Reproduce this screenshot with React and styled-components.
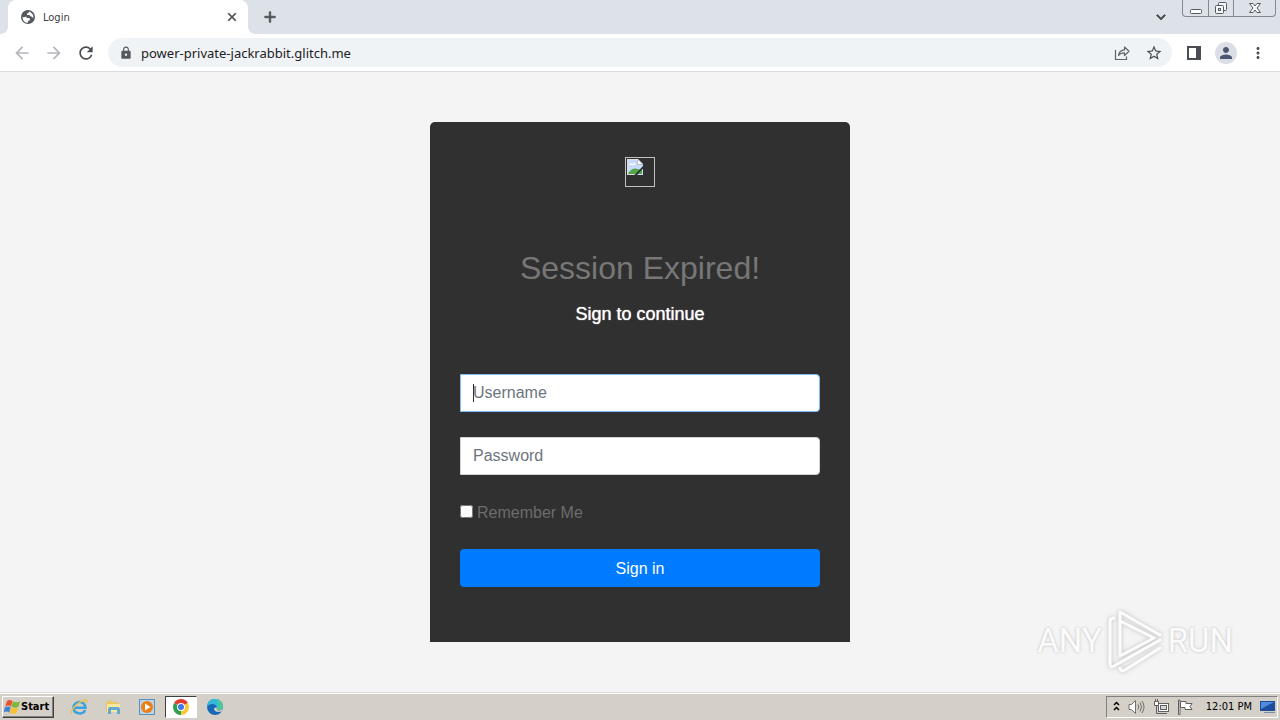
import styled, { createGlobalStyle, css } from 'styled-components';
import {
  MdClose,
  MdAdd,
  MdExpandMore,
  MdArrowBack,
  MdArrowForward,
  MdRefresh,
  MdLock,
  MdStarBorder,
  MdPerson,
  MdMoreVert,
} from 'react-icons/md';

const GlobalStyle = createGlobalStyle`
  * {
    box-sizing: border-box;
  }
  body {
    margin: 0;
    font-family: "Liberation Sans", Arial, sans-serif;
  }
  button {
    font-family: inherit;
    cursor: pointer;
  }
`;

const uiFont = css`
  font-family: "DejaVu Sans Condensed", Tahoma, "Noto Sans", sans-serif;
`;

const Screen = styled.div`
  display: flex;
  flex-direction: column;
  min-height: 100vh;
  background: #f4f4f4;
`;

/* browser */

const TabStrip = styled.header`
  ${uiFont}
  display: flex;
  align-items: flex-start;
  height: 34px;
  padding: 0 4px 0 8px;
  background: #dde1e8;
`;

const Tab = styled.div`
  position: relative;
  display: flex;
  align-items: center;
  gap: 7px;
  width: 240px;
  height: 34px;
  padding: 0 9px 0 12px;
  border-radius: 8px 8px 0 0;
  background: #fff;
  font-size: 11px;
  color: #3c4043;

  &::before,
  &::after {
    content: '';
    position: absolute;
    bottom: 0;
    width: 8px;
    height: 8px;
  }
  &::before {
    left: -8px;
    background: radial-gradient(circle at 0 0, transparent 8px, #fff 8px);
  }
  &::after {
    right: -8px;
    background: radial-gradient(circle at 100% 0, transparent 8px, #fff 8px);
  }
`;

const TabTitle = styled.span`
  flex: 1;
`;

const IconButton = styled.button`
  display: flex;
  align-items: center;
  justify-content: center;
  width: ${(p) => p.$size || 32}px;
  height: ${(p) => p.$size || 32}px;
  padding: 0;
  border: 0;
  background: none;
  color: ${(p) => p.$color || '#4a4d51'};

  ${(p) =>
    p.$bold &&
    css`
      svg {
        stroke-width: 1;
      }
      path[fill='none'] {
        stroke: none;
      }
    `}
`;

const TabButton = styled(IconButton)`
  width: 28px;
  height: 34px;
  margin-left: ${(p) => (p.$end ? 'auto' : '8px')};
`;

const WindowButtons = styled.div`
  display: flex;
  height: 17px;
  margin-left: 7px;
  border: 1px solid #85898f;
  border-top: 0;
  border-radius: 0 0 4px 4px;
`;

const WindowButton = styled.button`
  display: flex;
  align-items: center;
  justify-content: center;
  width: ${(p) => (p.$wide ? 42 : 25)}px;
  padding: 0;
  border: 0;
  border-left: ${(p) => (p.$first ? 0 : '1px solid #85898f')};
  background: none;
`;

const Toolbar = styled.nav`
  ${uiFont}
  display: flex;
  align-items: center;
  height: 38px;
  padding: 0 6px;
  border-bottom: 1px solid #d9dbde;
  background: #fff;
`;

const AddressBar = styled.div`
  display: flex;
  flex: 1;
  align-items: center;
  height: 29px;
  margin: 0 6px;
  padding: 0 2px 0 11px;
  border-radius: 15px;
  background: #f0f3f6;
`;

const Address = styled.input`
  flex: 1;
  min-width: 0;
  height: 28px;
  margin-left: 8px;
  padding: 0;
  border: 0;
  outline: 0;
  background: none;
  font-family: "Noto Sans", Tahoma, sans-serif;
  font-size: 13px;
  color: #202124;
`;

const Avatar = styled.span`
  display: flex;
  align-items: center;
  justify-content: center;
  width: 22px;
  height: 22px;
  border-radius: 50%;
  background: #dbdfe5;
`;

/* login page */

const Page = styled.main`
  position: relative;
  flex: 1;
  padding: 50px 15px;
`;

const Card = styled.form`
  display: flex;
  flex-direction: column;
  max-width: 420px;
  margin: 0 auto;
  padding: 35px 30px 55px;
  border-radius: 5px 5px 0 0;
  background: #303030;
`;

const LogoBox = styled.div`
  align-self: center;
  width: 30px;
  height: 30px;
  padding: 1px;
  border: 1px solid #c0c0c0;
`;

const Title = styled.h2`
  margin: 62px 0 0;
  font-size: 32px;
  line-height: 38px;
  font-weight: 400;
  text-align: center;
  color: #777;
`;

const Subtitle = styled.h5`
  margin: 16px 0 49px;
  font-size: 18px;
  line-height: 22px;
  font-weight: 400;
  text-align: center;
  color: #fff;
  text-shadow: 0 0 1px #fff;
`;

const Field = styled.div`
  position: relative;
  height: 38px;
  margin-bottom: 25px;
`;

const TextInput = styled.input`
  width: 100%;
  height: 38px;
  padding: 6px 12px;
  border: 1px solid ${(p) => (p.$active ? '#80bdff' : '#ced4da')};
  border-radius: 0 4px 4px 0;
  outline: 0;
  background: #fff;
  font-family: inherit;
  font-size: 16px;
  line-height: 24px;
  color: #495057;

  &::placeholder {
    color: #6c757d;
    opacity: 1;
  }
`;

const Caret = styled.span`
  position: absolute;
  top: 10px;
  left: 13px;
  width: 1px;
  height: 18px;
  background: #303030;
`;

const Remember = styled.label`
  display: flex;
  align-items: center;
  gap: 4px;
  margin-bottom: 23px;
  font-size: 16px;
  line-height: 26px;
  color: #6c6c6c;
`;

const Checkbox = styled.input`
  width: 13px;
  height: 13px;
  margin: 0 0 4px;
`;

const SignIn = styled.button`
  height: 38px;
  padding: 2px 12px 0;
  border: 0;
  border-radius: 4px;
  background: #007bff;
  font-size: 16px;
  line-height: 24px;
  color: #fff;
`;

const Watermark = styled.div`
  position: absolute;
  right: 47px;
  bottom: 18px;
  display: flex;
  align-items: center;
  gap: 4px;
  font-family: Roboto, sans-serif;
  font-size: 33px;
  line-height: 66px;
  color: #fbfbfb;
  text-shadow: 0 0 3px #bbb;

  svg {
    filter: drop-shadow(0 0 2px #bbb);
  }
`;

/* taskbar */

const Taskbar = styled.footer`
  ${uiFont}
  display: flex;
  align-items: center;
  height: 28px;
  padding: 0 2px;
  border-top: 1px solid #dedbd6;
  background: #d4d0c8;
  box-shadow: inset 0 1px #fff;
  font-size: 11px;
`;

const Start = styled.button`
  display: flex;
  align-items: center;
  gap: 1px;
  height: 22px;
  margin-right: 7px;
  padding: 0 4px 0 1px;
  border: 1px solid;
  border-color: #fff #404040 #404040 #fff;
  background: #d4d0c8;
  box-shadow: inset -1px -1px #808080;
  font-size: 11px;
  font-weight: 700;
  color: #000;
`;

const TaskButton = styled.button`
  display: flex;
  align-items: center;
  justify-content: center;
  width: 32px;
  height: 22px;
  margin-left: 2px;
  padding: 0;
  border: 1px solid;
  border-color: ${(p) => (p.$pressed ? '#404040 #fff #fff #404040' : 'transparent')};
  background: ${(p) => (p.$pressed ? '#fff' : 'none')};
`;

const Tray = styled.div`
  display: flex;
  align-items: center;
  gap: 8px;
  height: 22px;
  margin-left: auto;
  padding: 0 1px 0 6px;
  border: 1px solid;
  border-color: #808080 #fff #fff #808080;
`;

const Clock = styled.time`
  margin: 0 0 0 5px;
  color: #000;
`;

const GlobeIcon = () => (
  <svg width="16" height="16" viewBox="0 0 16 16">
    <circle cx="8" cy="8" r="7" fill="#55585c" />
    <path d="M2.500 8Q2.500 11 4.500 12.800Q6.500 14 8 13.500V12Q10 12 10 10.200Q10 9 8.500 9H6.500V7.500Q4 8.500 2.500 8Z" fill="#fff" />
    <path d="M9 2.600Q9 4.500 7 4.500V6H9.500Q10 7.500 11.500 7.500Q12.500 9 13.500 8.500Q13.500 4.500 9 2.600Z" fill="#fff" />
  </svg>
);

const ShareIcon = () => (
  <svg width="18" height="18" viewBox="0 0 18 18" fill="none" stroke="#5f6368" strokeWidth="1.2">
    <path d="M2.500 6V15.500H13.500V12.500" />
    <path d="M5.500 11.500C6 8 8 6 11.500 5.800V3L16 7.300L11.500 11.500V8.800C9 8.800 7 9.500 5.500 11.500Z" strokeLinejoin="round" />
  </svg>
);

const SidePanelIcon = () => (
  <svg width="14" height="14" viewBox="0 0 14 14">
    <path d="M1 1H13V13H1Z" fill="none" stroke="#4a4d51" strokeWidth="2" />
    <path d="M9 1H13V13H9Z" fill="#4a4d51" />
  </svg>
);

const MinimizeIcon = () => (
  <svg width="14" height="14" viewBox="0 0 14 14">
    <rect x="1.500" y="8.500" width="11" height="4" rx="1" fill="#fff" stroke="#555960" />
  </svg>
);

const RestoreIcon = () => (
  <svg width="14" height="14" viewBox="0 0 14 14" fill="#f4f5f7" stroke="#555960">
    <rect x="4.500" y="1.500" width="8" height="8" rx="1" />
    <rect x="1.500" y="4.500" width="8" height="8" rx="1" />
    <rect x="4.500" y="7.500" width="2" height="2" />
  </svg>
);

const CloseWindowIcon = () => (
  <svg width="14" height="14" viewBox="0 0 14 14">
    <path
      d="M1.500 2.500H5L7 5L9 2.500H12.500L9 7L12.500 11.500H9L7 9L5 11.500H1.500L5 7Z"
      fill="#fff"
      stroke="#555960"
      strokeLinejoin="round"
    />
  </svg>
);

const BrokenImage = () => (
  <svg width="16" height="16" viewBox="0 0 16 16" role="img" aria-label="logo">
    <path d="M0 0H11L16 5V16H0Z" fill="#c8dafa" />
    <path d="M2 6Q3 3 5 5Q8 3 9 6Z" fill="#fff" />
    <path d="M1 15Q3 10 8 9.500L15 11V15Z" fill="#54a546" />
    <path d="M10.500 0V5.500H16Z" fill="#fff" stroke="#aaa" strokeWidth=".7" />
    <path d="M16 7V9.500L10 16H7.500Z" fill="#303030" />
    <path d="M.5 16V.5H11M0 15.500H7" fill="none" stroke="#ddd" />
  </svg>
);

const PlayLogo = () => (
  <svg width="58" height="66" viewBox="0 0 58 66" fill="none" stroke="#fcfcfc" strokeWidth="3" strokeLinecap="round" strokeLinejoin="round">
    <path d="M54 27L14 4V48L48 30L16 14" />
    <path d="M8 10Q4 10 4 14V56Q4 60 8 58L54 32" />
    <path d="M14 60Q15 64 19 62L54 40" />
  </svg>
);

const WindowsFlag = () => (
  <svg width="16" height="16" viewBox="0 0 16 16">
    <path d="M3 2Q5 0 8.500 2L7 7.500Q4 5.500 1.200 7.500Z" fill="#e8542b" />
    <path d="M9 2.300Q12 4 16 2.300L14.300 8Q11 9.500 7.500 7.800Z" fill="#7db83a" />
    <path d="M1 8.300Q4 6.500 6.700 8.300L5.200 13.700Q2.500 11.500 -.5 13.500Z" fill="#3f83d4" />
    <path d="M7.200 8.600Q10 10.300 14 8.700L12.500 14Q9 15.500 5.700 14Z" fill="#f8c12c" />
  </svg>
);

const ExplorerIcon = () => (
  <svg width="18" height="18" viewBox="0 0 18 18" fill="none">
    <path d="M15 12C13.500 17 4.500 16.500 3.500 10.500C3 5 9 2.500 13 5C14.700 6.500 15.500 8 15.500 9.700H5" stroke="#3aa0de" strokeWidth="2.500" />
    <path d="M2 16C-1 13 8 3 16 2C17 2 17 3 16 5" stroke="#e8c34a" strokeWidth="1.300" />
  </svg>
);

const FolderIcon = () => (
  <svg width="18" height="18" viewBox="0 0 18 18">
    <path d="M2 4L7 2L8 4H15V14H2Z" fill="#e9c865" />
    <path d="M3 6H16V14H3Z" fill="#f8e7a0" />
    <path d="M4 16V11Q4 9 6 9H14Q16 9 16 11V16H13V12H7V16Z" fill="#62a9cf" />
  </svg>
);

const PlayerIcon = () => (
  <svg width="18" height="18" viewBox="0 0 18 18">
    <rect x="1.500" y="1.500" width="15" height="15" fill="#b9d5ec" stroke="#5b8fbc" />
    <circle cx="9" cy="9" r="6" fill="#ef7d16" />
    <path d="M7 5.500L12.500 9L7 12.500Z" fill="#fff" />
  </svg>
);

const ChromeIcon = () => (
  <svg width="16" height="16" viewBox="0 0 16 16">
    <path d="M8 8L1.100 4A8 8 0 0 1 14.900 4Z" fill="#e33b2e" />
    <path d="M8 8L14.900 4A8 8 0 0 1 8 16Z" fill="#fcc934" />
    <path d="M8 8L8 16A8 8 0 0 1 1.100 4Z" fill="#2da04e" />
    <circle cx="8" cy="8" r="4" fill="#fff" />
    <circle cx="8" cy="8" r="3" fill="#3b78e7" />
  </svg>
);

const EdgeIcon = () => (
  <svg width="16" height="16" viewBox="0 0 16 16">
    <circle cx="8" cy="8" r="8" fill="#1769b8" />
    <path d="M0 8A8 8 0 0 1 16 7.500Q16 11 12 11Q9 11 10 8.500Q9 5 5.500 5Q2 5 0 8Z" fill="#35b9d9" />
    <path d="M9 .2Q16 1 16 7.500Q16 11 12 11Q9 11 10 8.500Q13 5 9 .2Z" fill="#4fc79a" />
    <path d="M10 8.500Q9 11 12 11.500L16 10L14.500 12.500Q8 14 7 10Q7 8 10 8.500Z" fill="#d4d0c8" />
  </svg>
);

const ExpandTrayIcon = () => (
  <svg width="7" height="12" viewBox="0 0 7 12" fill="none" stroke="#000" strokeWidth="1.500">
    <path d="M1 4L3.500 1.500L6 4M1 9L3.500 6.500L6 9" />
  </svg>
);

const VolumeIcon = () => (
  <svg width="17" height="16" viewBox="0 0 17 16" fill="none" stroke="#707070">
    <path d="M1 5.500H3.500L7.500 1.500V14.500L3.500 10.500H1Z" fill="#fff" />
    <path d="M10 5.500Q11.500 8 10 10.500M12 3.500Q15 8 12 12.500M14 2Q18 8 14 14" />
  </svg>
);

const NetworkIcon = () => (
  <svg width="16" height="16" viewBox="0 0 16 16" fill="#fff" stroke="#606060">
    <rect x="5.500" y="4.500" width="10" height="8" />
    <rect x="7.500" y="6.500" width="6" height="4" fill="#d5d5d5" />
    <path d="M7 14.500H14M3.500 6V14.500H7" fill="none" />
    <path d="M1.500 2.500H5.500V6.500H1.500ZM2.500 0V2M4.500 0V2" />
  </svg>
);

const FlagIcon = () => (
  <svg width="16" height="16" viewBox="0 0 16 16" fill="#fff" stroke="#606060">
    <path d="M1.500 1V15.500H3V1Z" />
    <path d="M3.500 2.500H9V4.500H15L13 7.500L15 10.500H8V8.500H3.500Z" />
  </svg>
);

const DesktopIcon = () => (
  <svg width="16" height="14" viewBox="0 0 16 14">
    <path d="M0 1H15V11H0Z" fill="#1d4e9c" />
    <path d="M1 2H14L1 9Z" fill="#4d8ddb" />
    <path d="M4 12H15V13H4Z" fill="#7b8da8" />
  </svg>
);

const tasks = [
  { name: 'Internet Explorer', Icon: ExplorerIcon },
  { name: 'Windows Explorer', Icon: FolderIcon },
  { name: 'Media Player', Icon: PlayerIcon },
  { name: 'Google Chrome', Icon: ChromeIcon, pressed: true },
  { name: 'Microsoft Edge', Icon: EdgeIcon },
];

const Browser = () => (
  <>
    <TabStrip>
      <Tab>
        <GlobeIcon />
        <TabTitle>Login</TabTitle>
        <IconButton $size={14} $bold aria-label="Close tab"><MdClose size={14} /></IconButton>
      </Tab>
      <TabButton $bold aria-label="New tab"><MdAdd size={18} /></TabButton>
      <TabButton $end $bold aria-label="Search tabs"><MdExpandMore size={18} /></TabButton>
      <WindowButtons>
        <WindowButton $first aria-label="Minimize"><MinimizeIcon /></WindowButton>
        <WindowButton aria-label="Restore"><RestoreIcon /></WindowButton>
        <WindowButton $wide aria-label="Close"><CloseWindowIcon /></WindowButton>
      </WindowButtons>
    </TabStrip>
    <Toolbar>
      <IconButton $color="#b5b7ba" aria-label="Back"><MdArrowBack size={20} /></IconButton>
      <IconButton $color="#b5b7ba" aria-label="Forward"><MdArrowForward size={20} /></IconButton>
      <IconButton aria-label="Reload"><MdRefresh size={20} /></IconButton>
      <AddressBar>
        <MdLock size={14} color="#55585c" />
        <Address aria-label="Address" defaultValue="power-private-jackrabbit.glitch.me" />
        <IconButton aria-label="Share"><ShareIcon /></IconButton>
        <IconButton aria-label="Bookmark"><MdStarBorder size={18} /></IconButton>
      </AddressBar>
      <IconButton aria-label="Side panel"><SidePanelIcon /></IconButton>
      <IconButton aria-label="Profile"><Avatar><MdPerson size={18} color="#4c5670" /></Avatar></IconButton>
      <IconButton aria-label="Menu"><MdMoreVert size={18} /></IconButton>
    </Toolbar>
  </>
);

const LoginPage = () => (
  <Page>
    <Card onSubmit={(e) => e.preventDefault()}>
      <LogoBox><BrokenImage /></LogoBox>
      <Title>Session Expired!</Title>
      <Subtitle>Sign to continue</Subtitle>
      <Field>
        <TextInput $active type="text" aria-label="Username" placeholder="Username" />
        <Caret />
      </Field>
      <Field>
        <TextInput type="password" aria-label="Password" placeholder="Password" />
      </Field>
      <Remember>
        <Checkbox type="checkbox" />
        Remember Me
      </Remember>
      <SignIn type="submit">Sign in</SignIn>
    </Card>
    <Watermark>
      <span>ANY</span>
      <PlayLogo />
      <span>RUN</span>
    </Watermark>
  </Page>
);

const App = () => (
  <Screen>
    <GlobalStyle />
    <Browser />
    <LoginPage />
    <Taskbar>
      <Start><WindowsFlag />Start</Start>
      {tasks.map(({ name, Icon, pressed }) => (
        <TaskButton key={name} $pressed={pressed} aria-label={name}><Icon /></TaskButton>
      ))}
      <Tray>
        <ExpandTrayIcon />
        <VolumeIcon />
        <NetworkIcon />
        <FlagIcon />
        <Clock>12:01 PM</Clock>
        <DesktopIcon />
      </Tray>
    </Taskbar>
  </Screen>
);

export default App;
